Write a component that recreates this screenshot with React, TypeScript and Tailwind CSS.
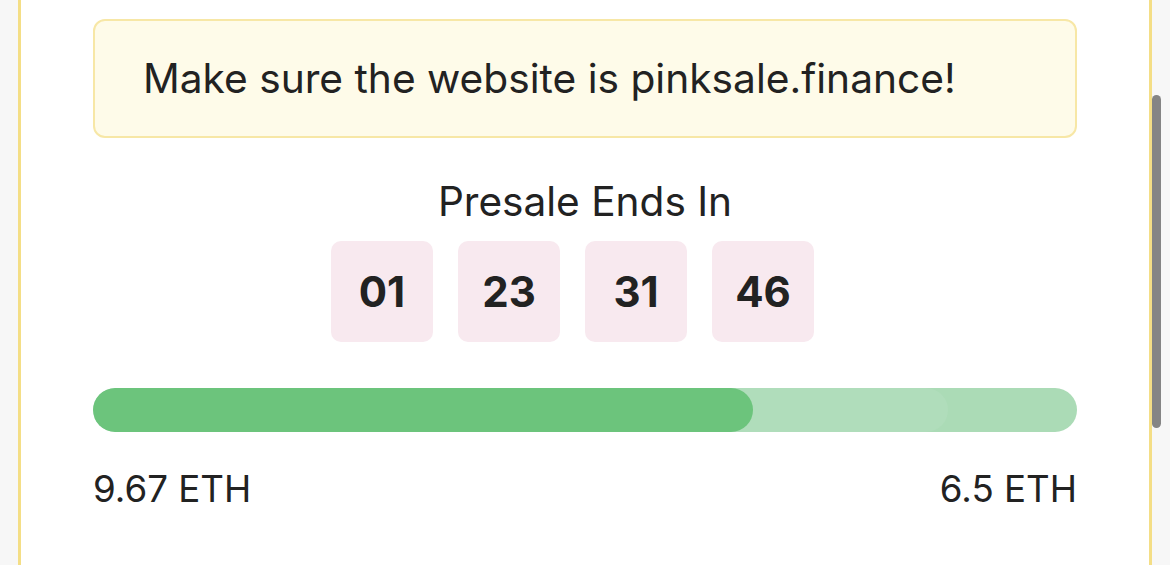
const TIMER = ["01", "23", "31", "46"];

export default function App() {
  return (
    <div
      className="relative flex h-screen w-full overflow-hidden bg-[#f7f7f7] text-[#222222]"
      style={{ fontFamily: "Inter, 'Noto Sans', sans-serif" }}
    >
      {/* Card */}
      <div className="ml-[18px] flex w-[1134px] flex-col border-x-[3px] border-[#f4de86] bg-white px-[72px] pt-[19px]">
        {/* Warning */}
        <div className="flex h-[119px] items-center rounded-xl border-2 border-[#f7e7a6] bg-[#fefbe9] pl-[48px]">
          <p className="text-[40.7px] leading-[48px]">
            Make sure the website is pinksale.finance!
          </p>
        </div>

        {/* Countdown */}
        <div className="mt-[40px] flex flex-col items-center">
          <h3 className="text-[40.6px] leading-[48px]">Presale Ends In</h3>
          <div className="mt-[15px] flex">
            {TIMER.map((t) => (
              <div
                key={t}
                className="mr-[25px] flex h-[101px] w-[102px] items-center justify-center rounded-[10px] bg-[#f8e9ef] text-[42px] font-bold"
              >
                {t}
              </div>
            ))}
          </div>
        </div>

        {/* Progress */}
        <div className="relative mt-[46px] h-[44px] w-full overflow-hidden rounded-full bg-[#abdbb6]">
          <div className="absolute inset-y-0 left-0 w-[855px] rounded-full bg-[#b0ddbb]" />
          <div className="absolute inset-y-0 left-0 w-[660px] rounded-full bg-[#6cc47c]" />
        </div>

        <div className="mt-[35px] flex justify-between text-[36.7px] leading-[44px]">
          <span>9.67 ETH</span>
          <span>6.5 ETH</span>
        </div>
      </div>

      {/* Scrollbar */}
      <div className="absolute left-[1152px] top-[95px] h-[333px] w-[9px] rounded-full bg-[#858585]" />
    </div>
  );
}
